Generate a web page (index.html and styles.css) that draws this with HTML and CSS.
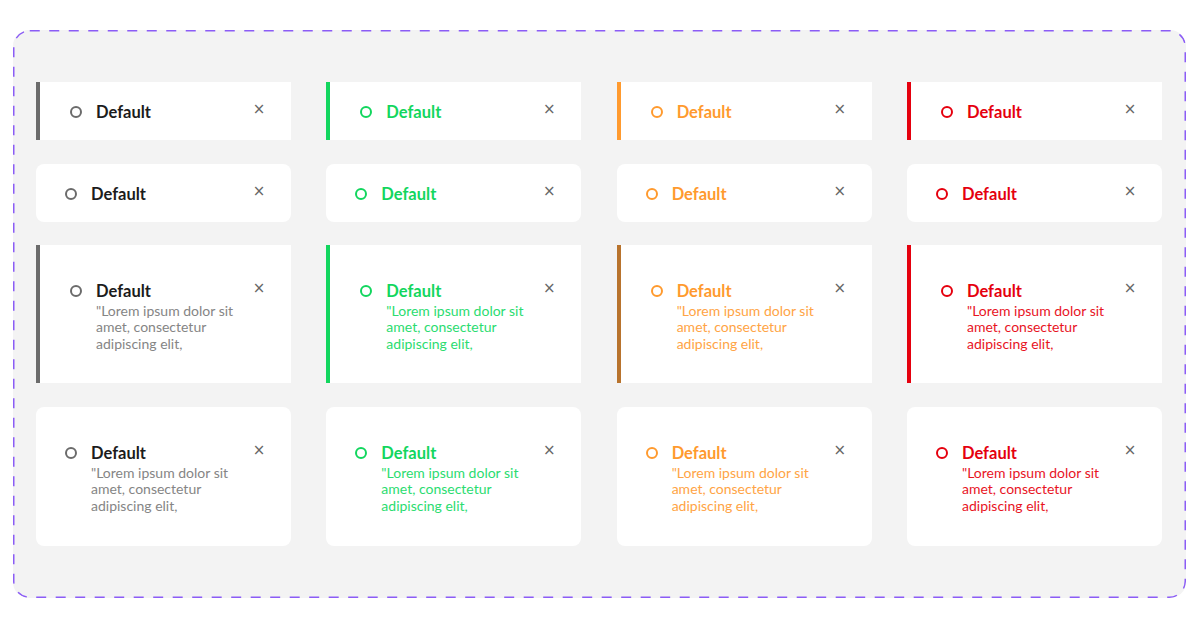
FILE: index.html
```html
<!DOCTYPE html>
<html lang="en">
<head>
<meta charset="utf-8">
<title>Alerts</title>
<link rel="stylesheet" href="styles.css">
</head>
<body>
<div class="frame">
  <div class="grid">
    <!-- Row 1: left bar, title only -->
    <div class="card bar t-gray"><div class="inner"><span class="dot"></span><span class="title">Default</span><span class="close">×</span></div></div>
    <div class="card bar t-green"><div class="inner"><span class="dot"></span><span class="title">Default</span><span class="close">×</span></div></div>
    <div class="card bar t-orange"><div class="inner"><span class="dot"></span><span class="title">Default</span><span class="close">×</span></div></div>
    <div class="card bar t-red"><div class="inner"><span class="dot"></span><span class="title">Default</span><span class="close">×</span></div></div>

    <!-- Row 2: rounded, title only -->
    <div class="card round t-gray"><div class="inner"><span class="dot"></span><span class="title">Default</span><span class="close">×</span></div></div>
    <div class="card round t-green"><div class="inner"><span class="dot"></span><span class="title">Default</span><span class="close">×</span></div></div>
    <div class="card round t-orange"><div class="inner"><span class="dot"></span><span class="title">Default</span><span class="close">×</span></div></div>
    <div class="card round t-red"><div class="inner"><span class="dot"></span><span class="title">Default</span><span class="close">×</span></div></div>

    <!-- Row 3: left bar, with description -->
    <div class="card bar tall t-gray"><div class="inner"><span class="dot"></span><span class="title">Default</span><span class="close">×</span><p class="desc">"Lorem ipsum dolor sit amet, consectetur adipiscing elit,</p></div></div>
    <div class="card bar tall t-green"><div class="inner"><span class="dot"></span><span class="title">Default</span><span class="close">×</span><p class="desc">"Lorem ipsum dolor sit amet, consectetur adipiscing elit,</p></div></div>
    <div class="card bar tall t-orange dark-bar"><div class="inner"><span class="dot"></span><span class="title">Default</span><span class="close">×</span><p class="desc">"Lorem ipsum dolor sit amet, consectetur adipiscing elit,</p></div></div>
    <div class="card bar tall t-red"><div class="inner"><span class="dot"></span><span class="title">Default</span><span class="close">×</span><p class="desc">"Lorem ipsum dolor sit amet, consectetur adipiscing elit,</p></div></div>

    <!-- Row 4: rounded, with description -->
    <div class="card round tall t-gray"><div class="inner"><span class="dot"></span><span class="title">Default</span><span class="close">×</span><p class="desc">"Lorem ipsum dolor sit amet, consectetur adipiscing elit,</p></div></div>
    <div class="card round tall t-green"><div class="inner"><span class="dot"></span><span class="title">Default</span><span class="close">×</span><p class="desc">"Lorem ipsum dolor sit amet, consectetur adipiscing elit,</p></div></div>
    <div class="card round tall t-orange"><div class="inner"><span class="dot"></span><span class="title">Default</span><span class="close">×</span><p class="desc">"Lorem ipsum dolor sit amet, consectetur adipiscing elit,</p></div></div>
    <div class="card round tall t-red"><div class="inner"><span class="dot"></span><span class="title">Default</span><span class="close">×</span><p class="desc">"Lorem ipsum dolor sit amet, consectetur adipiscing elit,</p></div></div>
  </div>
</div>
</body>
</html>
```

FILE: styles.css
```css
* { box-sizing: border-box; }

html, body {
  margin: 0;
  background: #ffffff;
}

body {
  padding: 30px 14px 32px 13px;
  font-family: Lato, "Noto Sans", "Liberation Sans", sans-serif;
}

.frame {
  width: 1173px;
  height: 568px;
  border-radius: 16px;
  background-color: #f3f3f3;
  background-image: url("data:image/svg+xml,%3Csvg xmlns='http://www.w3.org/2000/svg' width='1173' height='568'%3E%3Crect x='0.75' y='0.75' width='1171.5' height='566.5' rx='16' ry='16' fill='none' stroke='%238b5cf6' stroke-width='1.5' stroke-dasharray='10 9.5'/%3E%3C/svg%3E");
  padding: 52px 24px 0 23px;
}

.grid {
  display: grid;
  grid-template-columns: repeat(4, 255px);
  column-gap: 35.33px;
  grid-template-rows: 58px 58px 138px 139px;
  row-gap: 23.5px;
}

.card {
  background: #ffffff;
  display: flex;
  align-items: center;
  padding-right: 28px;
}

.card.bar {
  border-left: 4px solid var(--bar);
  padding-left: 30px;
}

.card.round {
  border-radius: 8px;
  padding-left: 29px;
}

.inner {
  flex: 1;
  display: grid;
  grid-template-columns: 12px 1fr 8px;
  column-gap: 14px;
  align-items: center;
  margin-top: 2px;
}

.dot {
  grid-column: 1;
  grid-row: 1;
  width: 12px;
  height: 12px;
  border-radius: 50%;
  border: 2px solid var(--fg);
}

.title {
  grid-column: 2;
  grid-row: 1;
  font-size: 16.5px;
  font-weight: 700;
  line-height: 20px;
  color: var(--title);
}

.close {
  grid-column: 3;
  grid-row: 1;
  font-family: "DejaVu Sans", sans-serif;
  font-size: 15px;
  line-height: 14px;
  width: 8px;
  color: #666666;
  margin-top: -6px;
  display: flex;
  justify-content: center;
}

.desc {
  grid-column: 2 / 4;
  grid-row: 2;
  margin: 2px 0 0;
  padding-right: 20px;
  font-size: 14px;
  line-height: 16.5px;
  color: var(--body);
}

.tall .inner {
  margin-top: 5px;
}

.t-gray   { --bar: #6b6b6b; --fg: #6b6b6b; --title: #1c1c1c; --body: #858585; }
.t-green  { --bar: #12d65e; --fg: #12d65e; --title: #12d65e; --body: #2bdc70; }
.t-orange { --bar: #ff9a2e; --fg: #ff9a2e; --title: #ff9a2e; --body: #ffa445; }
.t-red    { --bar: #e5000e; --fg: #e5000e; --title: #e5000e; --body: #e8141f; }

.dark-bar { --bar: #b8732d; }
```
